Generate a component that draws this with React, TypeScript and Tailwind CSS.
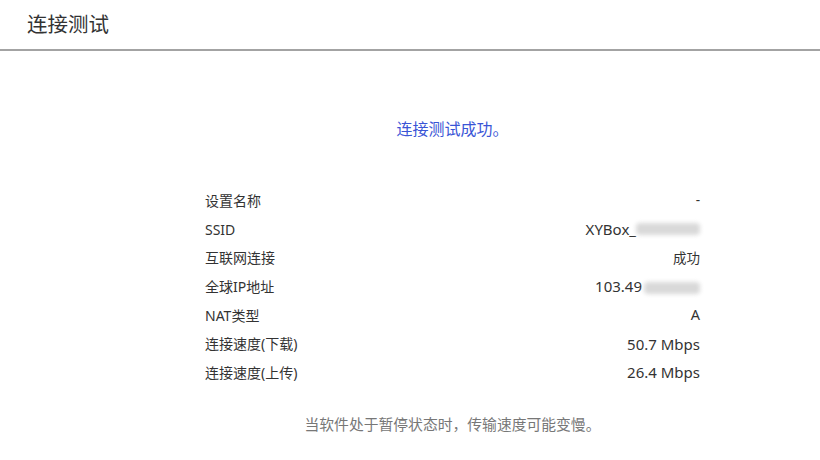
import React from "react";

type Row = { label: string; value: React.ReactNode };

function Blur({ w }: { w: number }) {
  return (
    <span
      className="inline-block h-[12px] bg-[#d9d9d9] blur-[2px] align-middle rounded-sm"
      style={{ width: w }}
    />
  );
}

const ROWS: Row[] = [
  { label: "设置名称", value: "-" },
  {
    label: "SSID",
    value: (
      <span className="flex items-center text-[15px]">
        XYBox_
        <Blur w={64} />
      </span>
    ),
  },
  { label: "互联网连接", value: "成功" },
  {
    label: "全球IP地址",
    value: (
      <span className="flex items-center text-[15px]">
        103.49
        <span className="ml-[2px]">
          <Blur w={56} />
        </span>
      </span>
    ),
  },
  { label: "NAT类型", value: <span className="text-[14.5px]">A</span> },
  { label: "连接速度(下载)", value: <span className="text-[15px]">50.7 Mbps</span> },
  { label: "连接速度(上传)", value: <span className="text-[15px]">26.4 Mbps</span> },
];

export default function App() {
  return (
    <div
      className="w-[820px] h-[460px] bg-white text-[#333] overflow-hidden"
      style={{ fontFamily: '"Noto Sans", "Noto Sans CJK SC", sans-serif' }}
    >
      <header className="h-[51px] flex items-center px-[27px] border-b-2 border-[#a3a3a3]">
        <h1 className="text-[20.5px] leading-none text-[#333]">连接测试</h1>
      </header>

      <div className="flex justify-center pl-[85px]">
        <div className="w-[495px] flex flex-col">
          <p className="mt-[67px] text-center text-[16px] text-[#3a55d6] leading-[22px]">
            连接测试成功。
          </p>

          <div className="mt-[46px] flex flex-col text-[13.5px]">
            {ROWS.map((r) => (
              <div key={r.label} className="h-[28.7px] flex items-center justify-between">
                <span className="text-[14px]">{r.label}</span>
                <span className="text-right">{r.value}</span>
              </div>
            ))}
          </div>

          <p className="mt-[26px] text-center text-[14.8px] text-[#777]">
            当软件处于暂停状态时，传输速度可能变慢。
          </p>
        </div>
      </div>
    </div>
  );
}
